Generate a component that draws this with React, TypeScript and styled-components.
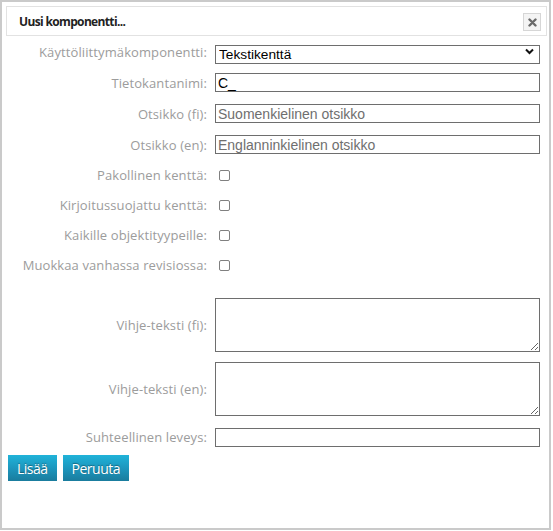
import React from "react";
import styled, { createGlobalStyle } from "styled-components";

const GlobalStyle = createGlobalStyle`
  html, body {
    margin: 0;
    padding: 0;
    background: #ffffff;
  }
  * {
    box-sizing: border-box;
  }
`;

const Dialog = styled.div`
  width: 551px;
  height: 530px;
  border: 2px solid #cacaca;
  background: #ffffff;
  display: flex;
  flex-direction: column;
  font-family: "Open Sans", "Noto Sans", sans-serif;
`;

const Header = styled.div`
  height: 30px;
  margin: 4px 2px 0 4px;
  border: 1px solid #e2e2e2;
  display: flex;
  align-items: center;
  justify-content: space-between;
  padding: 0 5px 0 12px;
`;

const Title = styled.span`
  font-size: 12px;
  font-weight: 700;
  color: #222222;
  letter-spacing: -0.65px;
`;

const CloseButton = styled.button`
  width: 18px;
  height: 18px;
  padding: 0;
  margin-top: 2px;
  border: 1px solid #d6d6d6;
  background: #f4f4f4;
  display: flex;
  align-items: center;
  justify-content: center;
  cursor: pointer;
`;

const Form = styled.div`
  display: flex;
  flex-direction: column;
  padding: 0 9px 0 6px;
`;

const Row = styled.div<{ $h: number }>`
  height: ${(p) => p.$h}px;
  display: grid;
  grid-template-columns: 199px 1fr;
  column-gap: 8px;
  align-items: center;
`;

const Spacer = styled.div<{ $h: number }>`
  height: ${(p) => p.$h}px;
`;

const Label = styled.label`
  text-align: right;
  font-size: 13px;
  color: #9c9c9c;
  white-space: nowrap;
  letter-spacing: 0.1px;
`;

const TextInput = styled.input`
  height: 19px;
  width: 100%;
  margin: 0;
  border: 1px solid #6e6e6e;
  padding: 0 2px;
  font-family: "Liberation Sans", Arial, sans-serif;
  font-size: 14px;
  color: #000000;
  outline: none;
  &::placeholder {
    color: #6f6f6f;
  }
`;

const SelectWrap = styled.div`
  position: relative;
  height: 19px;
`;

const Select = styled.select`
  appearance: none;
  width: 100%;
  height: 19px;
  margin: 0;
  border: 1px solid #6e6e6e;
  border-radius: 0;
  background: #ffffff;
  padding: 0 20px 0 3px;
  font-family: "Liberation Sans", Arial, sans-serif;
  font-size: 13.7px;
  color: #000000;
  outline: none;
`;

const Chevron = styled.svg`
  position: absolute;
  right: 6px;
  top: 6px;
  pointer-events: none;
`;

const Checkbox = styled.input`
  width: 11px;
  height: 11px;
  margin: 0 0 0 4px;
  appearance: none;
  border: 1px solid #808080;
  border-radius: 2px;
  background: #ffffff;
  display: block;
`;

const TextArea = styled.textarea`
  width: 100%;
  height: 54px;
  margin: 0;
  border: 1px solid #6e6e6e;
  padding: 2px;
  resize: vertical;
  font-family: "Liberation Sans", Arial, sans-serif;
  font-size: 13.33px;
  outline: none;
`;

const Buttons = styled.div`
  display: flex;
  gap: 6px;
  margin-top: 2px;
`;

const Button = styled.button`
  height: 26px;
  padding: 0 9px;
  border: none;
  background: linear-gradient(to bottom, #20b3d9 0%, #1c94bb 55%, #1a7c9d 100%);
  color: #ffffff;
  font-family: "Open Sans", "Noto Sans", sans-serif;
  font-size: 14px;
  letter-spacing: -0.5px;
  text-shadow: 0 -1px 1px rgba(0, 0, 0, 0.35);
  cursor: pointer;
`;

type Field =
  | { kind: "text"; label: string; value?: string; placeholder?: string }
  | { kind: "check"; label: string };

const fields: Field[] = [
  { kind: "text", label: "Tietokantanimi:", value: "C_" },
  { kind: "text", label: "Otsikko (fi):", placeholder: "Suomenkielinen otsikko" },
  { kind: "text", label: "Otsikko (en):", placeholder: "Englanninkielinen otsikko" },
  { kind: "check", label: "Pakollinen kenttä:" },
  { kind: "check", label: "Kirjoitussuojattu kenttä:" },
  { kind: "check", label: "Kaikille objektityypeille:" },
  { kind: "check", label: "Muokkaa vanhassa revisiossa:" },
];

export default function App() {
  return (
    <>
      <GlobalStyle />
      <Dialog>
        <Header>
          <Title>Uusi komponentti...</Title>
          <CloseButton aria-label="Sulje">
            <svg width="9" height="9" viewBox="0 0 9 9">
              <path d="M1.5 1.5 L7.5 7.5 M7.5 1.5 L1.5 7.5" stroke="#6a6a6a" strokeWidth="2.4" strokeLinecap="round" />
            </svg>
          </CloseButton>
        </Header>
        <Form>
          <Row $h={31}>
            <Label>Käyttöliittymäkomponentti:</Label>
            <SelectWrap>
              <Select defaultValue="text">
                <option value="text">Tekstikenttä</option>
              </Select>
              <Chevron width="9" height="7" viewBox="0 0 9 7">
                <path d="M1 1.5 L4.5 5 L8 1.5" fill="none" stroke="#111" strokeWidth="2" />
              </Chevron>
            </SelectWrap>
          </Row>
          {fields.map((f) =>
            f.kind === "text" ? (
              <Row $h={31} key={f.label}>
                <Label>{f.label}</Label>
                <TextInput defaultValue={f.value} placeholder={f.placeholder} />
              </Row>
            ) : (
              <Row $h={30} key={f.label}>
                <Label>{f.label}</Label>
                <div>
                  <Checkbox type="checkbox" />
                </div>
              </Row>
            )
          )}
          <Spacer $h={13} />
          <Row $h={64}>
            <Label>Vihje-teksti (fi):</Label>
            <TextArea />
          </Row>
          <Row $h={64}>
            <Label>Vihje-teksti (en):</Label>
            <TextArea />
          </Row>
          <Row $h={32}>
            <Label>Suhteellinen leveys:</Label>
            <TextInput />
          </Row>
          <Buttons>
            <Button>Lisää</Button>
            <Button>Peruuta</Button>
          </Buttons>
        </Form>
      </Dialog>
    </>
  );
}
